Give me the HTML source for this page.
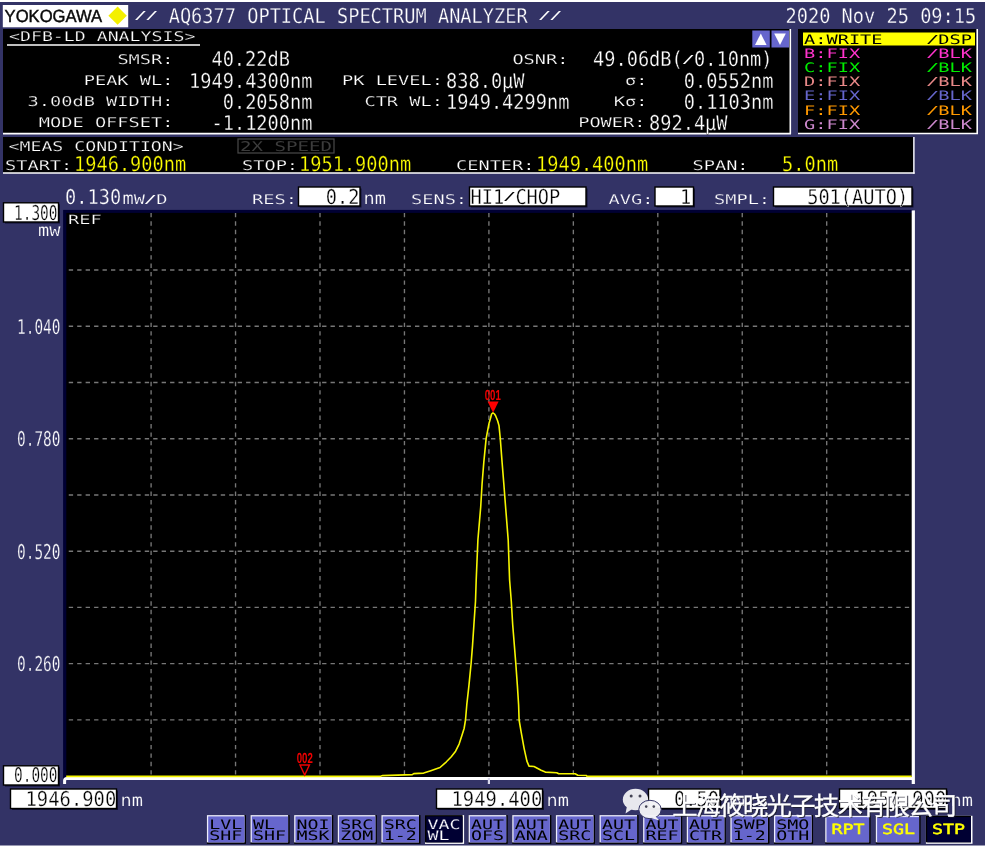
<!DOCTYPE html>
<html lang="en"><head><meta charset="utf-8"><title>AQ6377 Optical Spectrum Analyzer</title>
<style>html,body{margin:0;padding:0;background:#fff}body{width:988px;height:850px;overflow:hidden}svg{display:block}</style></head>
<body>
<svg width="988" height="850" viewBox="0 0 988 850" font-family='"DejaVu Sans Mono","Liberation Mono",monospace' text-rendering="geometricPrecision" style="will-change:transform">
<rect x="0.00" y="0.00" width="988.00" height="850.00" fill="#fff"/>
<rect x="0.00" y="2.00" width="985.00" height="843.50" fill="#333366"/>
<rect x="2.80" y="5.00" width="125.40" height="22.30" fill="#fff"/>
<text x="4.6" y="21.9" font-family='"Liberation Sans","DejaVu Sans",sans-serif' font-size="17.6" fill="#0a0a0a" stroke="#0a0a0a" stroke-width="0.45" textLength="97.5" lengthAdjust="spacingAndGlyphs">YOKOGAWA</text>
<polygon points="117.6,6.6 126.8,15.7 117.6,24.8 108.4,15.7" fill="#f4f000"/>
<text transform="translate(133.91,19.00) scale(2.0420,1)" font-size="10.9" fill="#fff">/</text>
<text transform="translate(145.14,19.00) scale(2.0420,1)" font-size="10.9" fill="#fff">/</text>
<text transform="translate(168.67,22.60) scale(0.9139,1)" font-size="20.4" fill="#fff" stroke="#333366" stroke-width="0.3">AQ6377 OPTICAL SPECTRUM ANALYZER</text>
<text transform="translate(537.98,19.00) scale(2.0420,1)" font-size="10.9" fill="#fff">/</text>
<text transform="translate(549.20,19.00) scale(2.0420,1)" font-size="10.9" fill="#fff">/</text>
<text transform="translate(785.50,22.60) scale(0.9139,1)" font-size="20.4" fill="#fff" stroke="#333366" stroke-width="0.3">2020 Nov 25 09:15</text>
<rect x="3.00" y="29.00" width="787.00" height="104.00" fill="#000"/>
<line x1="3.00" y1="133.60" x2="791.00" y2="133.60" stroke="#fff" stroke-width="1.7"/>
<line x1="790.30" y1="29.00" x2="790.30" y2="134.00" stroke="#fff" stroke-width="1.6"/>
<text transform="translate(9.00,41.00) scale(1.3598,1)" font-size="13.4" fill="#fff" stroke="#000" stroke-width="0.22">&lt;DFB-LD ANALYSIS&gt;</text>
<line x1="7.00" y1="45.00" x2="200.00" y2="45.00" stroke="#fff" stroke-width="1.3"/>
<text transform="translate(117.38,63.80) scale(1.3913,1)" font-size="13.4" fill="#fff" stroke="#000" stroke-width="0.22">SMSR:</text>
<text transform="translate(211.43,66.30) scale(0.9139,1)" font-size="20.4" fill="#fff" stroke="#000" stroke-width="0.3">40.22dB</text>
<text transform="translate(83.71,85.00) scale(1.3913,1)" font-size="13.4" fill="#fff" stroke="#000" stroke-width="0.22">PEAK WL:</text>
<text transform="translate(189.04,87.50) scale(0.9139,1)" font-size="20.4" fill="#fff" stroke="#000" stroke-width="0.3">1949.4300nm</text>
<text transform="translate(27.59,106.10) scale(1.3913,1)" font-size="13.4" fill="#fff" stroke="#000" stroke-width="0.22">3.00dB WIDTH:</text>
<text transform="translate(222.71,108.60) scale(0.9139,1)" font-size="20.4" fill="#fff" stroke="#000" stroke-width="0.3">0.2058nm</text>
<text transform="translate(38.81,127.20) scale(1.3913,1)" font-size="13.4" fill="#fff" stroke="#000" stroke-width="0.22">MODE OFFSET:</text>
<text transform="translate(211.48,129.70) scale(0.9139,1)" font-size="20.4" fill="#fff" stroke="#000" stroke-width="0.3">-1.1200nm</text>
<text transform="translate(341.98,85.00) scale(1.3913,1)" font-size="13.4" fill="#fff" stroke="#000" stroke-width="0.22">PK LEVEL:</text>
<text transform="translate(446.00,87.50) scale(0.9139,1)" font-size="20.4" fill="#fff" stroke="#000" stroke-width="0.3">838.0µW</text>
<text transform="translate(364.43,106.10) scale(1.3913,1)" font-size="13.4" fill="#fff" stroke="#000" stroke-width="0.22">CTR WL:</text>
<text transform="translate(446.00,108.60) scale(0.9139,1)" font-size="20.4" fill="#fff" stroke="#000" stroke-width="0.3">1949.4299nm</text>
<text transform="translate(512.38,63.80) scale(1.3913,1)" font-size="13.4" fill="#fff" stroke="#000" stroke-width="0.22">OSNR:</text>
<text transform="translate(593.00,66.30) scale(0.9139,1)" font-size="20.4" fill="#fff" stroke="#000" stroke-width="0.3">49.06dB(</text>
<text transform="translate(681.70,62.70) scale(2.0420,1)" font-size="10.9" fill="#fff">/</text>
<text transform="translate(694.02,66.30) scale(0.9139,1)" font-size="20.4" fill="#fff" stroke="#000" stroke-width="0.3">0.10nm)</text>
<text transform="translate(625.05,85.00) scale(1.3913,1)" font-size="13.4" fill="#fff" stroke="#000" stroke-width="0.22">σ:</text>
<text transform="translate(683.71,87.50) scale(0.9139,1)" font-size="20.4" fill="#fff" stroke="#000" stroke-width="0.3">0.0552nm</text>
<text transform="translate(613.83,106.10) scale(1.3913,1)" font-size="13.4" fill="#fff" stroke="#000" stroke-width="0.22">Kσ:</text>
<text transform="translate(683.71,108.60) scale(0.9139,1)" font-size="20.4" fill="#fff" stroke="#000" stroke-width="0.3">0.1103nm</text>
<text transform="translate(578.16,127.20) scale(1.3913,1)" font-size="13.4" fill="#fff" stroke="#000" stroke-width="0.22">POWER:</text>
<text transform="translate(649.00,129.70) scale(0.9139,1)" font-size="20.4" fill="#fff" stroke="#000" stroke-width="0.3">892.4µW</text>
<rect x="752.30" y="30.50" width="17.50" height="17.00" fill="#6666cc"/>
<polygon points="760.8,33.6 766.5999999999999,45 755.0,45" fill="#fff"/>
<rect x="771.50" y="30.50" width="17.50" height="17.00" fill="#6666cc"/>
<polygon points="780.0,45 785.8,33.6 774.2,33.6" fill="#fff"/>
<rect x="798.00" y="29.00" width="179.00" height="104.00" fill="#000"/>
<line x1="798.00" y1="133.60" x2="978.00" y2="133.60" stroke="#fff" stroke-width="1.5"/>
<line x1="977.20" y1="29.00" x2="977.20" y2="134.00" stroke="#fff" stroke-width="1.6"/>
<rect x="803.00" y="32.50" width="172.00" height="13.00" fill="#ffff00"/>
<text transform="translate(804.00,43.80) scale(1.4341,1)" font-size="13.0" fill="#000">A:WRITE</text>
<text transform="translate(926.02,42.80) scale(2.0420,1)" font-size="10.9" fill="#000">/</text>
<text transform="translate(938.33,43.80) scale(1.4341,1)" font-size="13.0" fill="#000">DSP</text>
<text transform="translate(804.00,57.95) scale(1.4341,1)" font-size="13.0" fill="#ff33cc">B:FIX</text>
<text transform="translate(926.02,56.95) scale(2.0420,1)" font-size="10.9" fill="#ff33cc">/</text>
<text transform="translate(938.33,57.95) scale(1.4341,1)" font-size="13.0" fill="#ff33cc">BLK</text>
<text transform="translate(804.00,72.10) scale(1.4341,1)" font-size="13.0" fill="#00ee00">C:FIX</text>
<text transform="translate(926.02,71.10) scale(2.0420,1)" font-size="10.9" fill="#00ee00">/</text>
<text transform="translate(938.33,72.10) scale(1.4341,1)" font-size="13.0" fill="#00ee00">BLK</text>
<text transform="translate(804.00,86.25) scale(1.4341,1)" font-size="13.0" fill="#e88888">D:FIX</text>
<text transform="translate(926.02,85.25) scale(2.0420,1)" font-size="10.9" fill="#e88888">/</text>
<text transform="translate(938.33,86.25) scale(1.4341,1)" font-size="13.0" fill="#e88888">BLK</text>
<text transform="translate(804.00,100.40) scale(1.4341,1)" font-size="13.0" fill="#6666cc">E:FIX</text>
<text transform="translate(926.02,99.40) scale(2.0420,1)" font-size="10.9" fill="#6666cc">/</text>
<text transform="translate(938.33,100.40) scale(1.4341,1)" font-size="13.0" fill="#6666cc">BLK</text>
<text transform="translate(804.00,114.55) scale(1.4341,1)" font-size="13.0" fill="#ff9900">F:FIX</text>
<text transform="translate(926.02,113.55) scale(2.0420,1)" font-size="10.9" fill="#ff9900">/</text>
<text transform="translate(938.33,114.55) scale(1.4341,1)" font-size="13.0" fill="#ff9900">BLK</text>
<text transform="translate(804.00,128.70) scale(1.4341,1)" font-size="13.0" fill="#cc88cc">G:FIX</text>
<text transform="translate(926.02,127.70) scale(2.0420,1)" font-size="10.9" fill="#cc88cc">/</text>
<text transform="translate(938.33,128.70) scale(1.4341,1)" font-size="13.0" fill="#cc88cc">BLK</text>
<rect x="3.00" y="137.00" width="910.00" height="36.00" fill="#000"/>
<line x1="3.00" y1="173.00" x2="914.60" y2="173.00" stroke="#fff" stroke-width="1.6"/>
<line x1="913.90" y1="137.00" x2="913.90" y2="173.80" stroke="#fff" stroke-width="1.4"/>
<text transform="translate(8.60,151.00) scale(1.3573,1)" font-size="13.4" fill="#fff" stroke="#000" stroke-width="0.22">&lt;MEAS CONDITION&gt;</text>
<rect x="238.00" y="139.00" width="96.00" height="14.00" fill="none" stroke="#4a4a4a" stroke-width="1.2"/>
<text transform="translate(240.00,151.00) scale(1.4255,1)" font-size="13.4" fill="#3c3c3c">2X SPEED</text>
<text transform="translate(5.00,170.00) scale(1.3913,1)" font-size="13.4" fill="#fff" stroke="#000" stroke-width="0.22">START:</text>
<text transform="translate(74.00,171.00) scale(0.9139,1)" font-size="20.4" fill="#ffff00" stroke="#000" stroke-width="0.3">1946.900nm</text>
<text transform="translate(242.00,170.00) scale(1.3913,1)" font-size="13.4" fill="#fff" stroke="#000" stroke-width="0.22">STOP:</text>
<text transform="translate(299.00,171.00) scale(0.9139,1)" font-size="20.4" fill="#ffff00" stroke="#000" stroke-width="0.3">1951.900nm</text>
<text transform="translate(456.00,170.00) scale(1.3913,1)" font-size="13.4" fill="#fff" stroke="#000" stroke-width="0.22">CENTER:</text>
<text transform="translate(536.00,171.00) scale(0.9139,1)" font-size="20.4" fill="#ffff00" stroke="#000" stroke-width="0.3">1949.400nm</text>
<text transform="translate(692.50,170.00) scale(1.3913,1)" font-size="13.4" fill="#fff" stroke="#000" stroke-width="0.22">SPAN:</text>
<text transform="translate(782.00,171.00) scale(0.9139,1)" font-size="20.4" fill="#ffff00" stroke="#000" stroke-width="0.3">5.0nm</text>
<text transform="translate(65.00,203.60) scale(0.9139,1)" font-size="20.4" fill="#fff" stroke="#333366" stroke-width="0.3">0.130</text>
<text transform="translate(122.50,203.60) scale(1.0955,1)" font-size="17.018" fill="#fff" stroke="#333366" stroke-width="0.22">m</text>
<text transform="translate(133.72,203.60) scale(1.3913,1)" font-size="13.4" fill="#fff" stroke="#333366" stroke-width="0.22">W</text>
<text transform="translate(143.86,202.60) scale(2.0420,1)" font-size="10.9" fill="#fff">/</text>
<text transform="translate(156.17,203.60) scale(1.3913,1)" font-size="13.4" fill="#fff" stroke="#333366" stroke-width="0.22">D</text>
<text transform="translate(252.00,203.60) scale(1.3913,1)" font-size="13.4" fill="#fff" stroke="#333366" stroke-width="0.22">RES:</text>
<rect x="300.00" y="188.50" width="61.50" height="19.00" fill="#111133"/>
<rect x="298.50" y="187.00" width="61.50" height="19.00" fill="#fff" stroke="#000" stroke-width="1.4"/>
<text transform="translate(325.83,203.60) scale(0.9139,1)" font-size="20.4" fill="#000" stroke="#fff" stroke-width="0.3">0.2</text>
<text transform="translate(363.50,203.60) scale(1.0955,1)" font-size="17.018" fill="#fff" stroke="#333366" stroke-width="0.22">nm</text>
<text transform="translate(411.00,203.60) scale(1.3913,1)" font-size="13.4" fill="#fff" stroke="#333366" stroke-width="0.22">SENS:</text>
<rect x="471.00" y="188.50" width="116.50" height="19.00" fill="#111133"/>
<rect x="469.50" y="187.00" width="116.50" height="19.00" fill="#fff" stroke="#000" stroke-width="1.4"/>
<text transform="translate(470.50,203.60) scale(0.9139,1)" font-size="20.4" fill="#000" stroke="#fff" stroke-width="0.3">HI1</text>
<text transform="translate(503.08,200.00) scale(2.0420,1)" font-size="10.9" fill="#000">/</text>
<text transform="translate(515.40,203.60) scale(0.9139,1)" font-size="20.4" fill="#000" stroke="#fff" stroke-width="0.3">CHOP</text>
<text transform="translate(608.50,203.60) scale(1.3913,1)" font-size="13.4" fill="#fff" stroke="#333366" stroke-width="0.22">AVG:</text>
<rect x="656.50" y="188.50" width="38.50" height="19.00" fill="#111133"/>
<rect x="655.00" y="187.00" width="38.50" height="19.00" fill="#fff" stroke="#000" stroke-width="1.4"/>
<text transform="translate(680.08,203.60) scale(0.9139,1)" font-size="20.4" fill="#000" stroke="#fff" stroke-width="0.3">1</text>
<text transform="translate(714.00,203.60) scale(1.3913,1)" font-size="13.4" fill="#fff" stroke="#333366" stroke-width="0.22">SMPL:</text>
<rect x="775.00" y="188.50" width="138.50" height="19.00" fill="#111133"/>
<rect x="773.50" y="187.00" width="138.50" height="19.00" fill="#fff" stroke="#000" stroke-width="1.4"/>
<text transform="translate(807.18,203.60) scale(0.9139,1)" font-size="20.4" fill="#000" stroke="#fff" stroke-width="0.3">501(AUTO)</text>
<rect x="63.10" y="209.90" width="850.00" height="570.00" fill="#000033"/>
<rect x="66.30" y="212.90" width="846.00" height="565.00" fill="#000"/>
<rect x="911.70" y="210.40" width="3.20" height="573.60" fill="#fff"/>
<path d="M64.6,784 V780.6 Q64.6,778.5 66.8,778.5 H913" fill="none" stroke="#fff" stroke-width="3"/>
<path d="M151.10,212.9V775.36M235.55,212.9V775.36M320.00,212.9V775.36M404.45,212.9V775.36M488.90,212.9V775.36M573.35,212.9V775.36M657.80,212.9V775.36M742.25,212.9V775.36M826.70,212.9V775.36" fill="none" stroke="#777777" stroke-width="1.35" stroke-dasharray="4.35 4.095"/>
<path d="M68.75,270.00H911.65M68.75,326.24H911.65M68.75,382.48H911.65M68.75,438.72H911.65M68.75,494.96H911.65M68.75,551.20H911.65M68.75,607.44H911.65M68.75,663.68H911.65M68.75,719.92H911.65" fill="none" stroke="#777777" stroke-width="1.35" stroke-dasharray="4.35 4.095"/>
<text transform="translate(68.00,223.80) scale(1.4796,1)" font-size="12.6" fill="#fff" stroke="#000" stroke-width="0.22">REF</text>
<polyline points="66.2,776.4 380.0,776.4 382.6,775.6 412.3,774.6 413.8,773.6 423.7,773.1 430.8,770.7 440.0,767.5 446.4,761.8 451.3,756.8 455.6,751.2 459.1,744.1 461.9,735.6 464.1,728.5 465.5,720.0 466.8,704.7 468.9,685.9 471.1,663.5 472.5,645.9 473.9,624.7 475.5,601.2 476.2,580.0 477.9,540.0 480.7,507.0 482.1,483.5 483.8,462.4 486.1,438.8 488.9,423.9 490.3,419.0 491.6,414.0 493.0,412.8 494.5,414.0 495.8,416.2 497.6,420.8 499.0,425.6 500.3,438.8 502.1,462.4 503.8,483.5 505.6,507.0 508.2,540.0 509.6,580.0 511.3,601.2 512.7,624.7 514.4,645.9 515.8,663.5 517.4,685.9 518.6,704.7 519.1,720.0 521.3,732.8 524.1,748.3 526.9,761.1 529.0,766.1 534.0,766.5 541.1,770.3 545.3,772.1 556.7,772.7 558.8,773.8 575.1,773.8 577.9,775.3 586.4,775.5 587.1,776.4 911.7,776.4" fill="none" stroke="#f6f600" stroke-width="1.6" stroke-linejoin="round"/>
<text transform="translate(492.80,400.20) scale(0.66,1)" font-family='"Liberation Sans","DejaVu Sans",sans-serif' font-size="14.6" fill="#f00000" font-weight="bold" text-anchor="middle">001</text>
<polygon points="487.6,401.6 498.6,401.6 493.1,412.8" fill="#ff0000"/>
<text transform="translate(304.80,763.20) scale(0.66,1)" font-family='"Liberation Sans","DejaVu Sans",sans-serif' font-size="14.6" fill="#f00000" font-weight="bold" text-anchor="middle">002</text>
<polygon points="300,765 309.4,765 304.7,775" fill="none" stroke="#f00000" stroke-width="1.4"/>
<rect x="487.80" y="778.00" width="2.20" height="6.00" fill="#d8d8ec"/>
<rect x="5.00" y="204.30" width="55.00" height="19.20" fill="#111133"/>
<rect x="3.50" y="202.80" width="55.00" height="19.20" fill="#fff" stroke="#000" stroke-width="1.4"/>
<text transform="translate(14.00,219.60) scale(0.7084,1)" font-size="20.4" fill="#000" stroke="#fff" stroke-width="0.3">1.300</text>
<text transform="translate(38.05,235.60) scale(1.0955,1)" font-size="17.018" fill="#fff" stroke="#333366" stroke-width="0.22">m</text>
<text transform="translate(49.28,235.60) scale(1.3913,1)" font-size="13.4" fill="#fff" stroke="#333366" stroke-width="0.22">W</text>
<text transform="translate(17.00,333.64) scale(0.7084,1)" font-size="20.4" fill="#fff" stroke="#333366" stroke-width="0.3">1.040</text>
<text transform="translate(17.00,446.12) scale(0.7084,1)" font-size="20.4" fill="#fff" stroke="#333366" stroke-width="0.3">0.780</text>
<text transform="translate(17.00,558.60) scale(0.7084,1)" font-size="20.4" fill="#fff" stroke="#333366" stroke-width="0.3">0.520</text>
<text transform="translate(17.00,671.08) scale(0.7084,1)" font-size="20.4" fill="#fff" stroke="#333366" stroke-width="0.3">0.260</text>
<rect x="5.00" y="767.30" width="55.00" height="19.20" fill="#111133"/>
<rect x="3.50" y="765.80" width="55.00" height="19.20" fill="#fff" stroke="#000" stroke-width="1.4"/>
<text transform="translate(14.00,782.40) scale(0.7084,1)" font-size="20.4" fill="#000" stroke="#fff" stroke-width="0.3">0.000</text>
<rect x="12.00" y="790.50" width="106.00" height="19.50" fill="#111133"/>
<rect x="10.50" y="789.00" width="106.00" height="19.50" fill="#fff" stroke="#000" stroke-width="1.4"/>
<text transform="translate(25.50,806.00) scale(0.9241,1)" font-size="20.4" fill="#000" stroke="#fff" stroke-width="0.3">1946.900</text>
<text transform="translate(120.50,805.50) scale(1.0955,1)" font-size="17.018" fill="#fff" stroke="#333366" stroke-width="0.22">nm</text>
<rect x="438.00" y="790.50" width="106.00" height="19.50" fill="#111133"/>
<rect x="436.50" y="789.00" width="106.00" height="19.50" fill="#fff" stroke="#000" stroke-width="1.4"/>
<text transform="translate(451.50,806.00) scale(0.9241,1)" font-size="20.4" fill="#000" stroke="#fff" stroke-width="0.3">1949.400</text>
<text transform="translate(546.50,805.50) scale(1.0955,1)" font-size="17.018" fill="#fff" stroke="#333366" stroke-width="0.22">nm</text>
<rect x="650.00" y="790.50" width="71.50" height="19.50" fill="#111133"/>
<rect x="648.50" y="789.00" width="71.50" height="19.50" fill="#fff" stroke="#000" stroke-width="1.4"/>
<text transform="translate(674.10,806.00) scale(0.9139,1)" font-size="20.4" fill="#000" stroke="#fff" stroke-width="0.3">0.50</text>
<text transform="translate(722.50,805.50) scale(1.0955,1)" font-size="17.018" fill="#fff" stroke="#333366" stroke-width="0.22">nm</text>
<text transform="translate(743.86,804.50) scale(2.0420,1)" font-size="10.9" fill="#fff">/</text>
<text transform="translate(756.17,805.50) scale(1.3913,1)" font-size="13.4" fill="#fff" stroke="#333366" stroke-width="0.22">D</text>
<rect x="841.00" y="790.50" width="107.00" height="19.50" fill="#111133"/>
<rect x="839.50" y="789.00" width="107.00" height="19.50" fill="#fff" stroke="#000" stroke-width="1.4"/>
<text transform="translate(855.50,806.00) scale(0.9241,1)" font-size="20.4" fill="#000" stroke="#fff" stroke-width="0.3">1951.900</text>
<text transform="translate(950.50,805.50) scale(1.0955,1)" font-size="17.018" fill="#fff" stroke="#333366" stroke-width="0.22">nm</text>
<rect x="206.90" y="815.10" width="39.10" height="28.80" fill="#000"/>
<rect x="206.90" y="815.10" width="37.60" height="27.30" fill="#eeeeff"/>
<rect x="208.20" y="816.40" width="36.30" height="26.00" fill="#6666cc"/>
<text transform="translate(209.30,828.80) scale(1.4055,1)" font-size="13.0" fill="#000">LVL</text>
<text transform="translate(209.30,840.20) scale(1.4055,1)" font-size="13.0" fill="#000">SHF</text>
<rect x="250.52" y="815.10" width="39.10" height="28.80" fill="#000"/>
<rect x="250.52" y="815.10" width="37.60" height="27.30" fill="#eeeeff"/>
<rect x="251.82" y="816.40" width="36.30" height="26.00" fill="#6666cc"/>
<text transform="translate(252.92,828.80) scale(1.4055,1)" font-size="13.0" fill="#000">WL</text>
<text transform="translate(252.92,840.20) scale(1.4055,1)" font-size="13.0" fill="#000">SHF</text>
<rect x="294.14" y="815.10" width="39.10" height="28.80" fill="#000"/>
<rect x="294.14" y="815.10" width="37.60" height="27.30" fill="#eeeeff"/>
<rect x="295.44" y="816.40" width="36.30" height="26.00" fill="#6666cc"/>
<text transform="translate(296.54,828.80) scale(1.4055,1)" font-size="13.0" fill="#000">NOI</text>
<text transform="translate(296.54,840.20) scale(1.4055,1)" font-size="13.0" fill="#000">MSK</text>
<rect x="337.76" y="815.10" width="39.10" height="28.80" fill="#000"/>
<rect x="337.76" y="815.10" width="37.60" height="27.30" fill="#eeeeff"/>
<rect x="339.06" y="816.40" width="36.30" height="26.00" fill="#6666cc"/>
<text transform="translate(340.16,828.80) scale(1.4055,1)" font-size="13.0" fill="#000">SRC</text>
<text transform="translate(340.16,840.20) scale(1.4055,1)" font-size="13.0" fill="#000">ZOM</text>
<rect x="381.38" y="815.10" width="39.10" height="28.80" fill="#000"/>
<rect x="381.38" y="815.10" width="37.60" height="27.30" fill="#eeeeff"/>
<rect x="382.68" y="816.40" width="36.30" height="26.00" fill="#6666cc"/>
<text transform="translate(383.78,828.80) scale(1.4055,1)" font-size="13.0" fill="#000">SRC</text>
<text transform="translate(383.78,840.20) scale(1.4055,1)" font-size="13.0" fill="#000">1-2</text>
<rect x="425.00" y="815.10" width="39.10" height="28.80" fill="#fff"/>
<rect x="425.00" y="815.10" width="37.60" height="27.30" fill="#000"/>
<rect x="426.30" y="816.40" width="36.30" height="26.00" fill="#000033"/>
<text transform="translate(427.40,828.80) scale(1.4055,1)" font-size="13.0" fill="#fff" stroke="#333366" stroke-width="0.22">VAC</text>
<text transform="translate(427.40,840.20) scale(1.4055,1)" font-size="13.0" fill="#fff" stroke="#333366" stroke-width="0.22">WL</text>
<rect x="468.62" y="815.10" width="39.10" height="28.80" fill="#000"/>
<rect x="468.62" y="815.10" width="37.60" height="27.30" fill="#eeeeff"/>
<rect x="469.92" y="816.40" width="36.30" height="26.00" fill="#6666cc"/>
<text transform="translate(471.02,828.80) scale(1.4055,1)" font-size="13.0" fill="#000">AUT</text>
<text transform="translate(471.02,840.20) scale(1.4055,1)" font-size="13.0" fill="#000">OFS</text>
<rect x="512.24" y="815.10" width="39.10" height="28.80" fill="#000"/>
<rect x="512.24" y="815.10" width="37.60" height="27.30" fill="#eeeeff"/>
<rect x="513.54" y="816.40" width="36.30" height="26.00" fill="#6666cc"/>
<text transform="translate(514.64,828.80) scale(1.4055,1)" font-size="13.0" fill="#000">AUT</text>
<text transform="translate(514.64,840.20) scale(1.4055,1)" font-size="13.0" fill="#000">ANA</text>
<rect x="555.86" y="815.10" width="39.10" height="28.80" fill="#000"/>
<rect x="555.86" y="815.10" width="37.60" height="27.30" fill="#eeeeff"/>
<rect x="557.16" y="816.40" width="36.30" height="26.00" fill="#6666cc"/>
<text transform="translate(558.26,828.80) scale(1.4055,1)" font-size="13.0" fill="#000">AUT</text>
<text transform="translate(558.26,840.20) scale(1.4055,1)" font-size="13.0" fill="#000">SRC</text>
<rect x="599.48" y="815.10" width="39.10" height="28.80" fill="#000"/>
<rect x="599.48" y="815.10" width="37.60" height="27.30" fill="#eeeeff"/>
<rect x="600.78" y="816.40" width="36.30" height="26.00" fill="#6666cc"/>
<text transform="translate(601.88,828.80) scale(1.4055,1)" font-size="13.0" fill="#000">AUT</text>
<text transform="translate(601.88,840.20) scale(1.4055,1)" font-size="13.0" fill="#000">SCL</text>
<rect x="643.10" y="815.10" width="39.10" height="28.80" fill="#000"/>
<rect x="643.10" y="815.10" width="37.60" height="27.30" fill="#eeeeff"/>
<rect x="644.40" y="816.40" width="36.30" height="26.00" fill="#6666cc"/>
<text transform="translate(645.50,828.80) scale(1.4055,1)" font-size="13.0" fill="#000">AUT</text>
<text transform="translate(645.50,840.20) scale(1.4055,1)" font-size="13.0" fill="#000">REF</text>
<rect x="686.72" y="815.10" width="39.10" height="28.80" fill="#000"/>
<rect x="686.72" y="815.10" width="37.60" height="27.30" fill="#eeeeff"/>
<rect x="688.02" y="816.40" width="36.30" height="26.00" fill="#6666cc"/>
<text transform="translate(689.12,828.80) scale(1.4055,1)" font-size="13.0" fill="#000">AUT</text>
<text transform="translate(689.12,840.20) scale(1.4055,1)" font-size="13.0" fill="#000">CTR</text>
<rect x="730.34" y="815.10" width="39.10" height="28.80" fill="#000"/>
<rect x="730.34" y="815.10" width="37.60" height="27.30" fill="#eeeeff"/>
<rect x="731.64" y="816.40" width="36.30" height="26.00" fill="#6666cc"/>
<text transform="translate(732.74,828.80) scale(1.4055,1)" font-size="13.0" fill="#000">SWP</text>
<text transform="translate(732.74,840.20) scale(1.4055,1)" font-size="13.0" fill="#000">1-2</text>
<rect x="773.96" y="815.10" width="39.10" height="28.80" fill="#000"/>
<rect x="773.96" y="815.10" width="37.60" height="27.30" fill="#eeeeff"/>
<rect x="775.26" y="816.40" width="36.30" height="26.00" fill="#6666cc"/>
<text transform="translate(776.36,828.80) scale(1.4055,1)" font-size="13.0" fill="#000">SMO</text>
<text transform="translate(776.36,840.20) scale(1.4055,1)" font-size="13.0" fill="#000">OTH</text>
<rect x="825.20" y="815.80" width="45.40" height="28.00" fill="#000"/>
<rect x="825.20" y="815.80" width="43.90" height="26.50" fill="#eeeeff"/>
<rect x="826.50" y="817.10" width="42.60" height="25.20" fill="#6666cc"/>
<text transform="translate(831.40,834.00) scale(1.3051,1)" font-size="14.0" fill="#ffff00" stroke="#ffff00" stroke-width="0.45">RPT</text>
<rect x="875.80" y="815.80" width="44.80" height="28.00" fill="#000"/>
<rect x="875.80" y="815.80" width="43.30" height="26.50" fill="#eeeeff"/>
<rect x="877.10" y="817.10" width="42.00" height="25.20" fill="#6666cc"/>
<text transform="translate(882.00,834.00) scale(1.3051,1)" font-size="14.0" fill="#ffff00" stroke="#ffff00" stroke-width="0.45">SGL</text>
<rect x="925.90" y="815.80" width="46.60" height="28.00" fill="#fff"/>
<rect x="925.90" y="815.80" width="45.10" height="26.50" fill="#000"/>
<rect x="927.20" y="817.10" width="43.80" height="25.20" fill="#000033"/>
<text transform="translate(932.10,834.00) scale(1.3051,1)" font-size="14.0" fill="#ffff00" stroke="#ffff00" stroke-width="0.45">STP</text>
<g opacity="0.96">
<ellipse cx="635.5" cy="799.5" rx="12.7" ry="10.7" fill="#f0f0f4"/><polygon points="627,806 625.5,813.4 633,808.5" fill="#f0f0f4"/>
<ellipse cx="650" cy="809.5" rx="11.2" ry="9.2" fill="#f4f4f7" stroke="#333366" stroke-width="1"/><polygon points="655,816 659.5,820.5 651,818" fill="#f4f4f7"/>
<circle cx="631.2" cy="796" r="1.5" fill="#445"/><circle cx="640" cy="796" r="1.5" fill="#445"/><circle cx="646.2" cy="806.6" r="1.3" fill="#445"/><circle cx="653.8" cy="806.6" r="1.3" fill="#445"/>
</g>
<text x="673.4" y="816.2" font-family='"Liberation Sans","Noto Sans CJK SC","WenQuanYi Zen Hei",sans-serif' font-size="25.4" fill="#1c1c2c" opacity="0.8" textLength="285" lengthAdjust="spacing">上海筱晓光子技术有限公司</text>
<text x="672.2" y="815.0" font-family='"Liberation Sans","Noto Sans CJK SC","WenQuanYi Zen Hei",sans-serif' font-size="25.4" fill="#fff" stroke="#fff" stroke-width="0.35" textLength="285" lengthAdjust="spacing">上海筱晓光子技术有限公司</text>
</svg>
</body></html>
